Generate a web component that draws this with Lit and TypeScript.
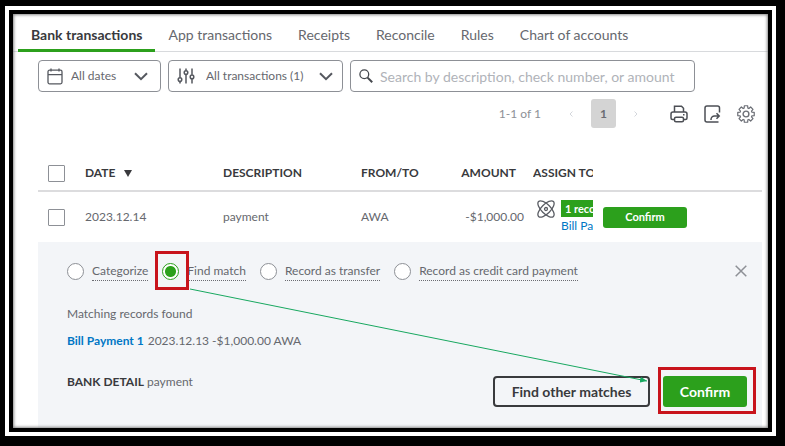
import { LitElement, html, svg, css } from "lit";
import { customElement, state } from "lit/decorators.js";

const chevron = html`<svg class="chev" width="14" height="9" viewBox="0 0 14 9" fill="none" stroke="#55585f" stroke-width="2"><path d="M1 1.2l6 6 6-6" /></svg>`;

const gearPath = (() => {
  const teeth = 8;
  const points: string[] = [];
  for (let i = 0; i < teeth; i++) {
    const a = (i / teeth) * Math.PI * 2;
    const at = (r: number, d: number) =>
      `${(9 + r * Math.sin(a + d)).toFixed(2)} ${(9 - r * Math.cos(a + d)).toFixed(2)}`;
    points.push(at(6.2, -0.3), at(8.4, -0.2), at(8.4, 0.2), at(6.2, 0.3));
  }
  return `M${points.join("L")}Z`;
})();

@customElement("app-root")
export class AppRoot extends LitElement {
  static styles = css`
    :host {
      display: flex;
      flex-direction: column;
      box-sizing: border-box;
      min-height: 100vh;
      padding: 6px 9px 10px 5px;
      background: #000;
      color: #66686e;
      font: 12px/18px Lato, "Liberation Sans", sans-serif;
    }
    * { box-sizing: border-box; }
    button, input, select { font: inherit; color: inherit; margin: 0; }
    svg { display: block; flex: none; }
    .frame { flex: 1; display: flex; border: 4px solid #fff; }
    .page {
      flex: 1;
      min-width: 0;
      display: flex;
      flex-direction: column;
      position: relative;
      border: 4px solid #000;
      background: #fff;
    }
    .page::after {
      content: "";
      position: absolute;
      inset: 0;
      box-shadow: inset 0 0 3px 1px #888;
      pointer-events: none;
    }
    .tabs {
      display: flex;
      height: 38px;
      padding-left: 5px;
      font-size: 14px;
      background: linear-gradient(#d8dadd, #d8dadd) 0 100% / 100% 1px no-repeat;
    }
    .tab {
      display: flex;
      align-items: center;
      padding: 7px 13px 0;
      border-bottom: 3px solid transparent;
      color: inherit;
      text-decoration: none;
      white-space: nowrap;
    }
    .tab.on { color: #393a3d; font-weight: 700; border-color: #2ca01c; }
    .filters { display: flex; gap: 7px; margin: 8px 73px 0 25px; }
    .field {
      display: flex;
      align-items: center;
      position: relative;
      height: 32px;
      border: 1px solid #8d9096;
      border-radius: 4px;
    }
    .field > svg { position: absolute; left: 8px; pointer-events: none; }
    .field > .chev { left: auto; right: 12px; }
    .field.kinds > .chev { right: 9px; }
    .field select, .field input {
      width: 100%;
      height: 100%;
      border: 0;
      padding: 0 0 0 32px;
      background: none;
      appearance: none;
      outline: 0;
    }
    .dates { width: 123px; }
    .kinds { width: 175px; }
    .kinds select { padding-left: 37px; }
    .search { flex: 1; }
    .search input { padding-left: 29px; font-size: 14px; }
    .search input::placeholder { color: #b0b3b9; opacity: 1; }
    .tools {
      display: flex;
      align-items: center;
      justify-content: flex-end;
      height: 29px;
      margin: 7px 13px 28px 25px;
      color: #8d9096;
    }
    .plain {
      display: flex;
      align-items: center;
      justify-content: center;
      padding: 0;
      border: 0;
      background: none;
    }
    .step { width: 18px; margin: 0 11px; color: #d4d7dc; }
    .count { margin-right: 10px; }
    .current {
      width: 25px;
      height: 29px;
      border-radius: 3px;
      background: #d4d4d4;
      color: #6b6c72;
      font-weight: 700;
    }
    .icons { display: flex; align-items: center; gap: 16px; margin-left: 14px; }
    .tablebox { margin: 0 6px 0 25px; }
    table { width: 100%; table-layout: fixed; border-collapse: collapse; }
    th, td { padding: 0; text-align: left; font-weight: 400; white-space: nowrap; }
    th { height: 35px; border-bottom: 2px solid #dcdcde; color: #393a3d; font-weight: 700; }
    td { height: 51px; }
    .c-check { width: 47px; }
    .c-date, .c-desc { width: 138px; }
    .c-from { width: 92px; }
    .c-amount { width: 80px; }
    .c-assign { width: 60px; }
    th.clip, td.clip { overflow: hidden; }
    th.amount { text-align: right; padding-right: 17px; }
    td.amount { text-align: right; padding-right: 9px; }
    .box {
      display: block;
      appearance: none;
      width: 17px;
      height: 17px;
      margin-left: 10px;
      border: 1px solid #8d9096;
      border-radius: 1px;
      background: #fff;
    }
    .sort { display: flex; align-items: center; gap: 9px; color: inherit; font-weight: 700; }
    .assign { display: flex; gap: 6px; padding-left: 4px; }
    .records {
      flex: 1;
      min-width: 0;
      overflow: hidden;
      line-height: 17px;
    }
    .records > * { display: block; }
    .badge { padding-left: 4px; background: #2ca01c; color: #fff; font-weight: 700; font-size: 11px; }
    a.link { color: #0077c5; text-decoration: none; }
    a.strong { font-weight: 700; margin-right: 4px; }
    .go {
      border: 0;
      border-radius: 3px;
      padding: 0;
      background: #2ca01c;
      color: #fff;
      font-weight: 700;
    }
    .small { display: block; width: 84px; height: 21px; margin-left: 10px; font-size: 11px; }
    .panel {
      flex: 1;
      position: relative;
      margin: 0 6px 0 25px;
      padding: 20px 15px 21px 29px;
      background: #f3f5f8;
    }
    .choices { display: flex; align-items: center; gap: 14px; height: 18px; white-space: nowrap; }
    .choice { display: flex; align-items: center; gap: 8px; }
    .choice span.name { border-bottom: 1px dotted #6b6c72; }
    .ring { position: relative; }
    .ring.marked::after {
      content: "";
      position: absolute;
      inset: -12px -10px -10px -7px;
      border: 3px solid #c8141c;
      pointer-events: none;
    }
    .radio {
      display: block;
      appearance: none;
      width: 17px;
      height: 17px;
      border: 1px solid #8d9096;
      border-radius: 50%;
      background: #fff;
    }
    .radio:checked {
      border-color: #2ca01c;
      background: radial-gradient(circle, #2ca01c 5px, #fff 6px);
    }
    .close { margin-left: auto; }
    .found { margin: 25px 0 0; }
    .match { margin: 9px 0 0; }
    .foot { display: flex; justify-content: space-between; margin-top: 23px; }
    .detail { margin: 0; }
    .detail b { color: #393a3d; font-weight: 700; }
    .actions { display: flex; gap: 13px; margin-top: 3px; font-size: 14px; }
    .other {
      width: 157px;
      height: 31px;
      padding: 0;
      border: 2px solid #393a3d;
      border-radius: 4px;
      background: none;
      color: #393a3d;
      font-weight: 700;
    }
    .spot { position: relative; }
    .spot::after {
      content: "";
      position: absolute;
      inset: -9px -9px -7px -5px;
      border: 3px solid #c8141c;
      pointer-events: none;
    }
    .large { width: 84px; height: 31px; }
    .arrow {
      position: absolute;
      left: 152px;
      top: 47px;
      width: calc(100% - 267px);
      height: 92px;
      overflow: visible;
      pointer-events: none;
    }
  `;

  @state() private mode = "Find match";

  private tabs = ["Bank transactions", "App transactions", "Receipts", "Reconcile", "Rules", "Chart of accounts"];
  private modes = ["Categorize", "Find match", "Record as transfer", "Record as credit card payment"];

  render() {
    return html`
      <div class="frame">
        <main class="page">
          <nav class="tabs">
            ${this.tabs.map((t, i) => html`<a class="tab ${i === 0 ? "on" : ""}" href="#">${t}</a>`)}
          </nav>
          <div class="filters">
            <div class="field dates">
              <svg width="16" height="17" viewBox="0 0 16 17" fill="none" stroke="#55585f" stroke-width="1.3">
                <rect x="1" y="2.2" width="14" height="13.6" rx="1.5" /><path d="M1 6.6h14M4 .5v3M12 .5v3" />
              </svg>
              <select aria-label="Dates"><option>All dates</option></select>
              ${chevron}
            </div>
            <div class="field kinds">
              <svg width="18" height="16" viewBox="0 0 18 16" fill="none" stroke="#55585f" stroke-width="1.5">
                <path d="M3 .5v9M3 13.7v1.8M9 .5v2M9 6.7v8.8M15 .5v6.3M15 11v4.5" />
                <circle cx="3" cy="11.6" r="1.8" /><circle cx="9" cy="4.6" r="1.8" /><circle cx="15" cy="8.9" r="1.8" />
              </svg>
              <select aria-label="Transactions"><option>All transactions (1)</option></select>
              ${chevron}
            </div>
            <div class="field search">
              <svg width="14" height="14" viewBox="0 0 14 14" fill="none" stroke="#44474d">
                <circle cx="5.3" cy="5.3" r="4.4" stroke-width="1.3" /><path d="M8.6 8.6l4.6 4.6" stroke-width="2" />
              </svg>
              <input type="text" aria-label="Search" placeholder="Search by description, check number, or amount" />
            </div>
          </div>
          <div class="tools">
            <span class="count">1-1 of 1</span>
            <button class="plain step" aria-label="Previous page">
              <svg width="4" height="6" viewBox="0 0 4 6" fill="none" stroke="currentColor"><path d="M3.5.5L1 3l2.5 2.5" /></svg>
            </button>
            <button class="plain current">1</button>
            <button class="plain step" aria-label="Next page">
              <svg width="4" height="6" viewBox="0 0 4 6" fill="none" stroke="currentColor"><path d="M.5.5L3 3 .5 5.5" /></svg>
            </button>
            <div class="icons">
              <button class="plain" aria-label="Print">
                <svg width="18" height="18" viewBox="0 0 18 18" fill="none" stroke="#4c4f55" stroke-width="1.5">
                  <path d="M4.5 7V1.2h7l2 2V7" /><path d="M4 14.5H2.5A1.5 1.5 0 0 1 1 13V9a2 2 0 0 1 2-2h12a2 2 0 0 1 2 2v4a1.5 1.5 0 0 1-1.5 1.5H14" />
                  <rect x="4.5" y="12.3" width="9" height="4.5" rx="1.5" /><path d="M13 9.7h1.5" />
                </svg>
              </button>
              <button class="plain" aria-label="Export">
                <svg width="17" height="18" viewBox="0 0 17 18" fill="none" stroke="#4c4f55" stroke-width="1.5">
                  <path d="M15.5 7.5V3a2 2 0 0 0-2-2H3a2 2 0 0 0-2 2v12a2 2 0 0 0 2 2h11.5" />
                  <path d="M7 15v-.5a3.5 3.5 0 0 1 3.5-3.5H15M12.5 8.3l2.7 2.7-2.7 2.7" />
                </svg>
              </button>
              <button class="plain" aria-label="Settings">
                <svg width="18" height="18" viewBox="0 0 18 18" fill="none" stroke="#6b6e75" stroke-width="1.2" stroke-linejoin="round">
                  <path d="${gearPath}" /><circle cx="9" cy="9" r="2.9" stroke-width="1.4" />
                </svg>
              </button>
            </div>
          </div>
          <div class="tablebox">
            <table>
              <colgroup>
                <col class="c-check" /><col class="c-date" /><col class="c-desc" /><col class="c-from" />
                <col class="c-amount" /><col class="c-assign" /><col />
              </colgroup>
              <thead>
                <tr>
                  <th><input class="box" type="checkbox" aria-label="Select all" /></th>
                  <th>
                    <button class="plain sort">DATE
                      <svg width="8" height="7" viewBox="0 0 8 7"><path d="M0 0h8L4 7z" fill="#393a3d" /></svg>
                    </button>
                  </th>
                  <th>DESCRIPTION</th>
                  <th>FROM/TO</th>
                  <th class="amount">AMOUNT</th>
                  <th class="clip">ASSIGN TO</th>
                  <th></th>
                </tr>
              </thead>
              <tbody>
                <tr>
                  <td><input class="box" type="checkbox" aria-label="Select payment" /></td>
                  <td>2023.12.14</td>
                  <td>payment</td>
                  <td>AWA</td>
                  <td class="amount">-$1,000.00</td>
                  <td class="clip">
                    <div class="assign">
                      <svg width="18" height="18" viewBox="0 0 18 18" fill="none" stroke="#5a5d64" stroke-width="1.3">
                        <ellipse cx="9" cy="9" rx="10.5" ry="4.6" transform="rotate(45 9 9)" />
                        <ellipse cx="9" cy="9" rx="10.5" ry="4.6" transform="rotate(-45 9 9)" />
                        <circle cx="9" cy="9" r="1.5" />
                      </svg>
                      <div class="records">
                        <span class="badge">1 reco</span>
                        <a class="link" href="#">Bill Pa</a>
                      </div>
                    </div>
                  </td>
                  <td><button class="go small">Confirm</button></td>
                </tr>
              </tbody>
            </table>
          </div>
          <section class="panel">
            <div class="choices">
              ${this.modes.map(
                (m) => html`<label class="choice">
                  <span class="ring ${m === "Find match" ? "marked" : ""}">
                    <input class="radio" type="radio" name="mode" .checked=${m === this.mode} @change=${() => (this.mode = m)} />
                  </span>
                  <span class="name">${m}</span>
                </label>`
              )}
              <button class="plain close" aria-label="Close">
                <svg width="12" height="12" viewBox="0 0 12 12" stroke="#8d9096" stroke-width="1.5"><path d="M.7.7l10.6 10.6M11.3.7L.7 11.3" /></svg>
              </button>
            </div>
            <p class="found">Matching records found</p>
            <p class="match"><a class="link strong" href="#">Bill Payment 1</a>2023.12.13 -$1,000.00 AWA</p>
            <div class="foot">
              <p class="detail"><b>BANK DETAIL</b> payment</p>
              <div class="actions">
                <button class="other">Find other matches</button>
                <span class="spot"><button class="go large">Confirm</button></span>
              </div>
            </div>
            <svg class="arrow">
              <defs>
                <marker id="head" markerWidth="7" markerHeight="6" refX="7" refY="3" orient="auto" markerUnits="userSpaceOnUse">
                  ${svg`<path d="M0 0l7 3-7 3z" fill="#18a860" />`}
                </marker>
              </defs>
              <line x1="0" y1="0" x2="100%" y2="100%" stroke="#18a860" marker-end="url(#head)" />
            </svg>
          </section>
        </main>
      </div>
    `;
  }
}
